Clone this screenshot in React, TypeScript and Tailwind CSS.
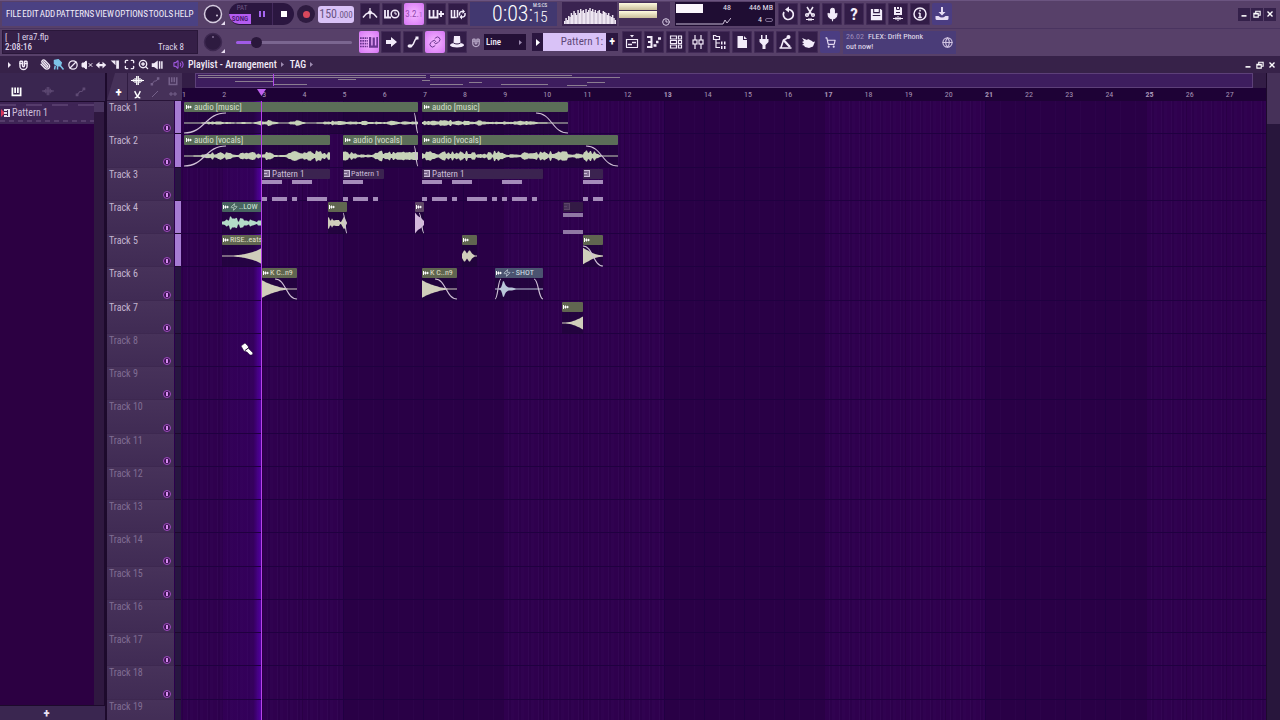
import type { ReactNode } from "react";
import { clsx } from "clsx";
import {
  Ban,
  Clock3,
  Globe,
  Link,
  Magnet,
  Maximize,
  Mic,
  Paperclip,
  ShoppingCart,
  Volume2,
  VolumeX,
  ZoomIn,
  Zap,
} from "lucide-react";

const MENUS = ["FILE", "EDIT", "ADD", "PATTERNS", "VIEW", "OPTIONS", "TOOLS", "HELP"];
const TIMELINE = 1084;
const BARS = Array.from({ length: 27 }, (_, i) => i + 1);
const TRACKS = Array.from({ length: 19 }, (_, i) => i + 1);
const COLORED = [1, 2, 4, 5];

/* ---------- icons ---------- */

function Glyph({ children, className = "size-4" }: { children: ReactNode; className?: string }) {
  return (
    <svg viewBox="0 0 16 16" fill="none" stroke="currentColor" strokeWidth="1.5" className={clsx("shrink-0", className)} aria-hidden="true">
      {children}
    </svg>
  );
}

const piano = <path d="M1.500 4v7.500h8V4M5.500 4v7" strokeWidth="1.800" />;
const wave = <path d="M0 8h16M3 6.500v3M5 5v6M7 2.500v11M9 2.500v11M11 5v6M13 6.500v3" strokeWidth="1.500" />;
const slide = (
  <>
    <path d="M3 13l4-5h3l3-4" strokeWidth="1.600" />
    <path d="M1 11h4v4H1zM11 2h4v4h-4z" fill="currentColor" stroke="none" />
  </>
);

const PianoKeys = ({ className }: { className?: string }) => (
  <Glyph className={className}>
    <path d="M2 2v11.500h12V2M6 2v8M10 2v8" strokeWidth="2.500" />
  </Glyph>
);

const transportButtons: { label: string; icon: ReactNode; lit?: boolean }[] = [
  {
    label: "Metronome",
    icon: (
      <Glyph>
        <path d="M1 11.500L4 8l3-1.500h2L12 8l3 3.500" />
        <path d="M8 2v10.500" strokeWidth="1.200" />
        <circle cx="8" cy="6.500" r="2" fill="currentColor" stroke="none" />
      </Glyph>
    ),
  },
  {
    label: "Wait for input",
    icon: (
      <Glyph>
        <path d="M1 4v7.500h6M4 4v7" strokeWidth="1.800" />
        <circle cx="11" cy="8" r="3.800" />
        <path d="M11 5.500V8h2" strokeWidth="1" />
      </Glyph>
    ),
  },
  { label: "Countdown", lit: true, icon: <span className="text-[9px] text-[#8f48ae]">3.2.<span className="text-[8px] opacity-70">1</span></span> },
  {
    label: "Blend recording",
    icon: (
      <Glyph>
        {piano}
        <path d="M13 5v6M10.500 8h5.500" strokeWidth="1.800" />
      </Glyph>
    ),
  },
  {
    label: "Loop recording",
    icon: (
      <Glyph>
        <path d="M1.500 4v7.500h5M4.500 4v7M7.500 4v7.500" strokeWidth="1.600" />
        <path d="M9.500 9.500V8a2.500 2.500 0 0 1 3-2.500h1M15 7v1.500a2.500 2.500 0 0 1-3 2.500h-1" />
        <path d="M12.500 3l2.500 2.500L12.500 8zM12 8.500v5l-2.500-2.500z" fill="currentColor" stroke="none" />
      </Glyph>
    ),
  },
];

const editButtons: { label: string; icon: ReactNode; lit?: boolean }[] = [
  {
    label: "Typing keyboard to piano",
    lit: true,
    icon: (
      <Glyph className="size-[18px]">
        <path d="M0 4.500h7M0 7h7M0 9.500h7M0 12h7" strokeWidth="1.500" strokeDasharray="1.500 .600" />
        <path d="M9 3.500V12h6.500V3.500M12.200 4v8" strokeWidth="2" />
      </Glyph>
    ),
  },
  {
    label: "Auto scroll",
    icon: (
      <Glyph>
        <path d="M3 6h5V3l6 5-6 5v-3H3z" fill="currentColor" stroke="none" />
      </Glyph>
    ),
  },
  {
    label: "Step edit",
    icon: (
      <Glyph>
        <path d="M5 12c5 0 3-6 7-8" strokeWidth="1.500" />
        <ellipse cx="5" cy="12" rx="2.500" ry="1.800" fill="currentColor" stroke="none" />
        <path d="M10.500 2.500h3v3h-3z" fill="currentColor" stroke="none" />
      </Glyph>
    ),
  },
  { label: "Link notes", lit: true, icon: <Link className="size-[12px]" strokeWidth={2} /> },
  {
    label: "Multilink",
    icon: (
      <Glyph>
        <path d="M5 2h6l.5 7c3 .5 3.500 1.500 3.500 2.500C14 14 2 14 1 11.500 1 10.500 2 9.500 4.500 9z" fill="currentColor" stroke="none" />
        <path d="M4.500 9c2 1.300 5 1.300 7 0" stroke="#2f1a45" strokeWidth="1" />
      </Glyph>
    ),
  },
];

const fileButtons: { label: string; icon: ReactNode; blue?: boolean }[] = [
  {
    label: "Undo",
    icon: (
      <Glyph>
        <path d="M8.500 3.500a5 5 0 1 1-4.500 2.500" strokeWidth="1.700" />
        <path d="M9 .5v6L5 3.500z" fill="currentColor" stroke="none" />
      </Glyph>
    ),
  },
  {
    label: "Cut",
    icon: (
      <Glyph>
        <path d="M5 1l5 8M11 1L6 9" />
        <circle cx="5" cy="9" r="1.300" />
        <circle cx="11" cy="9" r="1.300" />
        <path d="M4 13.500h8M7 12v3M9 12v3" strokeWidth="1" />
      </Glyph>
    ),
  },
  { label: "Record", icon: <Mic className="size-[15px]" fill="currentColor" strokeWidth={1.8} /> },
  { label: "Help", icon: <span className="text-[17px] leading-none font-bold">?</span> },
  {
    label: "Save",
    icon: (
      <Glyph className="size-[15px]">
        <path d="M2 2h10.500L14 3.500V14H2z" fill="currentColor" stroke="none" />
        <path d="M5 2v4h6V2M4 9h8" stroke="#2f1a45" strokeWidth="1.100" />
      </Glyph>
    ),
  },
  {
    label: "Save as audio",
    icon: (
      <Glyph>
        <path d="M4 1h7l1 1v7H4z" fill="currentColor" stroke="none" />
        <path d="M6.500 1v2.500h3V1M6 6.500h4" stroke="#2f1a45" strokeWidth="1" />
        <path d="M3 12.500h10M6 11v3M8 10v5M10 11v3" strokeWidth="1" />
      </Glyph>
    ),
  },
  {
    label: "Info",
    icon: (
      <Glyph>
        <circle cx="8" cy="8" r="6" />
        <path d="M8 7v4.500M6.500 7.300H8M6.200 11.500h3.600M8 3.800v1.600" />
      </Glyph>
    ),
  },
  {
    label: "Download",
    blue: true,
    icon: (
      <Glyph>
        <path d="M7 1h2v5h2.500L8 9.500 4.500 6H7z" fill="currentColor" stroke="none" />
        <path d="M1.500 10v2.500Q1.500 14 3 14h10q1.500 0 1.500-1.500V10h-3q-3.500 3-7 0z" fill="currentColor" stroke="none" />
      </Glyph>
    ),
  },
];

const viewButtons: { label: string; icon: ReactNode; blue?: boolean }[] = [
  {
    label: "Playlist",
    icon: (
      <Glyph>
        <path d="M2 5.500h12M2 13.500h12M2.500 5v8M13.500 5v8" strokeWidth="1.200" />
        <path d="M4 10.500h4M8 8.500h4" />
        <path d="M6 1h4L8 3.500z" fill="currentColor" stroke="none" />
      </Glyph>
    ),
  },
  {
    label: "Piano roll",
    icon: (
      <Glyph>
        <path d="M1 3h4.500v10H1M2 8h4" strokeWidth="2" />
        <path d="M7.500 11.500h3M10 8h2.500M12 4.500h3" strokeWidth="2.500" />
      </Glyph>
    ),
  },
  {
    label: "Channel rack",
    icon: (
      <Glyph>
        <path d="M2.500 2h6v3h-6zM2.500 6.500h6v3h-6zM2.500 11h6v3h-6zM10.500 2h3v3h-3zM10.500 6.500h3v3h-3zM10.500 11h3v3h-3z" strokeWidth="1.200" />
      </Glyph>
    ),
  },
  {
    label: "Mixer",
    icon: (
      <Glyph>
        <path d="M5 1v5M5 10v5M11 1v5M11 10v5" strokeWidth="1.200" />
        <rect x="3" y="6" width="4" height="4" strokeWidth="1.200" />
        <rect x="9" y="6" width="4" height="4" strokeWidth="1.200" />
      </Glyph>
    ),
  },
  {
    label: "Browser",
    icon: (
      <Glyph>
        <path d="M1.500 1.500h2l1 1h3v3h-6zM4 6v7.500h4M4 9h4" strokeWidth="1.200" />
        <path d="M9 7.500h1.500v3H9zM12 7.500h1.500v3H12zM9 12h1.500v3H9zM12 12h1.500v3H12z" fill="currentColor" stroke="none" />
      </Glyph>
    ),
  },
  {
    label: "New",
    icon: (
      <Glyph>
        <path d="M3.500 2H9v4h4v8H3.500z" fill="currentColor" stroke="none" />
        <path d="M10 2l3 3h-3z" fill="currentColor" stroke="none" />
      </Glyph>
    ),
  },
  {
    label: "Plugin picker",
    icon: (
      <Glyph>
        <path d="M5 1h1.500v4h3V1H11v4h1.500v3L9.500 11v4h-3v-4l-3-3V5H5z" fill="currentColor" stroke="none" />
      </Glyph>
    ),
  },
  {
    label: "Touch controller",
    icon: (
      <Glyph>
        <path d="M1.500 14h12M3 13.500L5.500 6l4-2" strokeWidth="1.600" />
        <path d="M5.500 6l6.500 7" strokeWidth="2.200" />
        <circle cx="10.500" cy="3" r="2" fill="currentColor" stroke="none" />
      </Glyph>
    ),
  },
  {
    label: "Touch",
    icon: (
      <Glyph>
        <path d="M2 4l5 2 1-1 4 2 1 1 2-.5-2 5-4 1.500-4-1-1-1.500-2-.5 2-1.500L2 8l2-1z" fill="currentColor" stroke="none" />
      </Glyph>
    ),
  },
  { label: "Shop", blue: true, icon: <ShoppingCart className="size-[11px]" strokeWidth={2.5} /> },
];

function ToolButton({ label, lit, blue, children }: { label: string; lit?: boolean; blue?: boolean; children: ReactNode }) {
  return (
    <button
      aria-label={label}
      className={clsx(
        "flex h-[22px] w-5 shrink-0 items-center justify-center rounded-[2px]",
        lit && "bg-radial from-[#f6b8ff] to-[#d673f5] text-[#6a3590]",
        blue && "bg-[#4b3d82] text-[#e6dcf4]",
        !lit && !blue && "bg-[#321c47] text-[#f3ecfa] shadow-[inset_0_0_0_1px_#432b58]",
      )}
    >
      {children}
    </button>
  );
}

/* ---------- toolbar ---------- */

function Knob({ label, light }: { label: string; light?: boolean }) {
  return (
    <button aria-label={label} className="flex w-[31px] shrink-0 items-center justify-center">
      <svg viewBox="0 0 22 22" className="size-[22px]" aria-hidden="true">
        <circle cx="10" cy="11" r="8.500" fill="#2e1b40" stroke={light ? "#d6cce0" : "#3d2850"} strokeWidth="1.500" />
        {light ? <circle cx="14" cy="12.500" r="1" fill="#d6cce0" /> : <path d="M10 5v2" stroke="#a995bb" />}
        <path d="M22 18v4h-4z" fill="#e6dcf0" />
      </svg>
    </button>
  );
}

const scopeBars = [3, 6, 4, 8, 7, 11, 9, 13, 11, 9, 14, 11, 15, 13, 14, 11, 15, 12, 14, 16, 13, 15, 12, 14, 11, 13, 14, 11, 10, 13, 12, 11, 9, 11, 8, 7, 9, 6, 4];

function Toolbar() {
  return (
    <header className="flex h-14 shrink-0 flex-col border-t border-[#6b5480] bg-[#574069]">
      <div className="flex h-7 items-center border-b border-[#4a3460] px-[2px]">
        <nav className="flex h-6 w-[196px] shrink-0 items-center gap-px bg-[#4b4183] pl-1 text-[9px] whitespace-nowrap text-[#f3eefa]">
          {MENUS.map((m) => (
            <button key={m}>{m}</button>
          ))}
        </nav>
        <Knob label="Master volume" light />
        <div className="flex h-[22px] w-[65px] shrink-0 overflow-hidden rounded-full bg-[#2b1640]">
          <div className="flex w-[22px] flex-col text-[7px] leading-none">
            <button className="h-[11px] pl-1 text-[#6b5580]">PAT</button>
            <button className="h-[10px] rounded-bl-full bg-[#b45cf0] font-medium text-[#3b1260]">SONG</button>
          </div>
          <button aria-label="Pause" className="flex flex-1 items-center justify-center gap-[2px] border-r border-[#43295c]">
            <span className="h-[6px] w-[2px] bg-[#a566f0]" />
            <span className="h-[6px] w-[2px] bg-[#a566f0]" />
          </button>
          <button aria-label="Stop" className="flex flex-1 items-center justify-center">
            <span className="size-[6px] bg-white" />
          </button>
        </div>
        <button aria-label="Record" className="mx-[3px] flex size-[18px] shrink-0 items-center justify-center rounded-full bg-[#2e1b40]">
          <span className="size-[7px] rounded-full bg-[#d8485c]" />
        </button>
        <button className="h-[17px] w-9 shrink-0 rounded-[3px] bg-[#d9c2f7] text-[12px] leading-[17px] text-[#6a5484]">
          150<span className="text-[9px]">.000</span>
        </button>
        <div className="ml-[6px] flex gap-[2px]">
          {transportButtons.map((b) => (
            <ToolButton key={b.label} label={b.label} lit={b.lit}>
              {b.icon}
            </ToolButton>
          ))}
        </div>
        <div className="ml-[2px] flex h-6 w-[87px] shrink-0 justify-end bg-[#423870] pr-1 text-white">
          <span className="text-[22px] leading-6 font-light">0:03:</span>
          <span className="flex w-5 flex-col">
            <span className="text-[5px] leading-[7px]">M:S:CS</span>
            <span className="text-[15px] leading-4 font-light">15</span>
          </span>
        </div>
        <svg viewBox="0 0 55 24" preserveAspectRatio="none" className="ml-[5px] h-6 w-[55px] shrink-0 bg-[#3a2350]" aria-hidden="true">
          {scopeBars.map((h, i) => (
            <rect key={i} x={2 + i * 1.33} y={22 - h} width="1.500" height={h} fill="#eee6f2" />
          ))}
        </svg>
        <div className="ml-[2px] flex h-6 w-[51px] shrink-0 items-end justify-between bg-[#452e59]">
          <div className="flex h-[22px] w-[38px] flex-col gap-px self-start pt-px">
            <span className="h-[7px] bg-linear-to-b from-[#fffbe0] to-[#c9bd9a]" />
            <span className="h-[7px] bg-linear-to-b from-[#fffbe0] to-[#c9bd9a]" />
          </div>
          <Clock3 className="size-2 text-[#d8cce4]" strokeWidth={3} />
        </div>
        <div className="ml-[5px] flex h-6 w-[100px] shrink-0 bg-[#1f0d33] text-[8px] leading-3 text-[#e8e0f0]">
          <div className="relative w-14">
            <svg viewBox="0 0 56 24" className="size-full" aria-hidden="true">
              <path d="M1 2h27v9H1z" fill="#fbf6fd" />
              <path d="M1 22h47l2-4 2 3 4-5" fill="none" stroke="#c9bcd6" />
            </svg>
            <span className="absolute top-0 right-0">48</span>
          </div>
          <div className="flex flex-1 flex-col items-end pr-[2px]">
            <span>446 MB</span>
            <span className="flex items-center gap-[3px]">
              4 <span className="h-1 w-2 rounded-full border border-[#7c6a90]" />
            </span>
          </div>
        </div>
        <div className="ml-[3px] flex gap-[2px]">
          {fileButtons.map((b) => (
            <ToolButton key={b.label} label={b.label} blue={b.blue}>
              {b.icon}
            </ToolButton>
          ))}
        </div>
        <div className="mr-[2px] ml-auto flex h-[13px] gap-px">
          <WindowButtons boxed />
        </div>
      </div>

      <div className="flex h-7 items-center px-[2px]">
        <div className="flex h-6 w-[196px] shrink-0 flex-col justify-center border border-[#2a173a] bg-[#351f47] px-[2px] text-[9px] leading-[10px] text-[#ded3e8]">
          <span className="whitespace-pre">[     ] era7.flp</span>
          <span className="flex justify-between">
            <span className="font-medium">2:08:16</span>
            <span className="mr-[11px]">Track 8</span>
          </span>
        </div>
        <Knob label="Master pitch" />
        <div className="mx-[7px] flex w-[116px] shrink-0 items-center">
          <input
            type="range"
            aria-label="Song position"
            defaultValue={14}
            className="h-[3px] w-full appearance-none rounded-full bg-linear-to-r from-[#a05be6] from-18% to-[#7b6690] to-18% [&::-webkit-slider-thumb]:size-[11px] [&::-webkit-slider-thumb]:appearance-none [&::-webkit-slider-thumb]:rounded-full [&::-webkit-slider-thumb]:bg-[#2a173b]"
          />
        </div>
        <div className="flex gap-[2px]">
          {editButtons.map((b) => (
            <ToolButton key={b.label} label={b.label} lit={b.lit}>
              {b.icon}
            </ToolButton>
          ))}
        </div>
        <Magnet className="mr-[3px] ml-1 size-[10px] shrink-0 rotate-135 text-[#b7a7c6]" strokeWidth={3} />
        <div className="flex h-4 w-[42px] shrink-0 items-center bg-[#241036] pr-1">
          <select aria-label="Snap" className="w-full appearance-none pl-[2px] text-[9px] font-medium text-[#efe8f5]">
            <option>Line</option>
          </select>
          <Caret className="h-[5px] w-[3px] text-[#9d8bb0]" />
        </div>
        <div className="ml-[6px] flex h-[18px] w-[86px] shrink-0 bg-[#2b1640]">
          <button aria-label="Previous pattern" className="flex w-[11px] items-center justify-center text-white">
            <Caret className="h-[7px] w-1" />
          </button>
          <button className="flex-1 bg-[#d9c2f7] pr-[3px] text-right text-[11px] leading-[18px] text-[#5e4878]">Pattern 1:</button>
          <button aria-label="Add pattern" className="w-[12px] text-[12px] leading-[16px] font-bold text-white">
            +
          </button>
        </div>
        <div className="ml-1 flex gap-[2px]">
          {viewButtons.map((b) => (
            <ToolButton key={b.label} label={b.label} blue={b.blue}>
              {b.icon}
            </ToolButton>
          ))}
        </div>
        <a href="#news" className="ml-[3px] flex h-[23px] w-[113px] shrink-0 items-center justify-between bg-[#4a3c78] px-[3px] text-[8px] leading-[10px] text-[#ebe3f4]">
          <span>
            <span className="mr-1 text-[#9c8bb8]">26.02</span>FLEX: Drift Phonk
            <br />
            out now!
          </span>
          <Globe className="size-[11px] shrink-0 text-[#cfc2e0]" strokeWidth={2.5} />
        </a>
      </div>
    </header>
  );
}

function Caret({ className }: { className?: string }) {
  return (
    <svg viewBox="0 0 4 8" preserveAspectRatio="none" className={clsx("shrink-0", className)} aria-hidden="true">
      <path d="M0 0l4 4-4 4z" fill="currentColor" />
    </svg>
  );
}

function WindowButtons({ boxed }: { boxed?: boolean }) {
  const shapes = [
    { label: "Minimize", path: <path d="M4 11h8" strokeWidth="2.500" /> },
    { label: "Restore", path: <path d="M3 7h7v6H3zM6 6V3.500h7V10h-2M3 8h7" strokeWidth="1.800" /> },
    { label: "Close", path: <path d="M4 4l8 8M12 4l-8 8" strokeWidth="2.200" /> },
  ];
  return (
    <>
      {shapes.map((s) => (
        <button
          key={s.label}
          aria-label={s.label}
          className={clsx("flex h-[13px] w-[12px] items-center justify-center text-white", boxed && "bg-[#34204a]")}
        >
          <Glyph className="size-[10px]">{s.path}</Glyph>
        </button>
      ))}
    </>
  );
}

/* ---------- playlist title bar ---------- */

const playlistTools: { label: string; icon: ReactNode }[] = [
  { label: "Draw", icon: <Paperclip className="size-[11px] -scale-x-100" strokeWidth={3} /> },
  {
    label: "Paint",
    icon: (
      <Glyph className="size-3 text-[#7cc4e8]">
        <path d="M2 2l5-1 4 4-1 3-4 1-4-3zM9 8l5 6M3 9l-1 5M6 10v4" fill="currentColor" strokeWidth="2" />
      </Glyph>
    ),
  },
  { label: "Delete", icon: <Ban className="size-[10px] -scale-x-100" strokeWidth={3} /> },
  { label: "Mute", icon: <VolumeX className="size-3" fill="currentColor" strokeWidth={2} /> },
  {
    label: "Slip",
    icon: (
      <Glyph className="size-3">
        <path d="M1 8l5-4.500V6.500h4V3.500L15 8l-5 4.500V9.500H6v3z" fill="currentColor" stroke="none" />
      </Glyph>
    ),
  },
  {
    label: "Slice",
    icon: (
      <Glyph className="size-[11px]">
        <path d="M1 2h7v7zM9 2h4v12H9z" fill="currentColor" stroke="none" />
      </Glyph>
    ),
  },
  { label: "Select", icon: <Maximize className="size-[11px]" strokeWidth={3} /> },
  { label: "Zoom", icon: <ZoomIn className="size-[11px]" strokeWidth={3} /> },
  {
    label: "Playback",
    icon: (
      <Glyph className="size-3">
        <path d="M1 5.500h3L9 2v12l-5-3.500H1z" fill="currentColor" stroke="none" />
        <path d="M11.500 3v10M14.500 3v10" strokeWidth="2" />
      </Glyph>
    ),
  },
];

function PlaylistTitle() {
  return (
    <div className="flex h-[17px] shrink-0 items-center bg-[#372249] pr-[2px] text-[10px] font-medium text-[#f1eaf7]">
      <button aria-label="Playlist menu" className="flex w-4 justify-center pl-[3px]">
        <Caret className="h-[6px] w-[3px]" />
      </button>
      <button aria-label="Snap to grid" className="mr-2 flex w-[14px] justify-center">
        <Magnet className="size-[11px] rotate-135" strokeWidth={3} />
      </button>
      {playlistTools.map((t) => (
        <button key={t.label} aria-label={t.label} className="flex w-[14px] justify-center">
          {t.icon}
        </button>
      ))}
      <Volume2 className="mr-1 ml-[9px] size-[11px] text-[#9a55d8]" strokeWidth={2.5} />
      <h1>Playlist - Arrangement</h1>
      <Caret className="mr-[6px] ml-1 h-[5px] w-[3px] text-[#9d8bb0]" />
      <span>TAG</span>
      <Caret className="ml-1 h-[5px] w-[3px] text-[#9d8bb0]" />
      <div className="ml-auto flex">
        <WindowButtons />
      </div>
    </div>
  );
}

/* ---------- picker panel ---------- */

function Picker() {
  return (
    <aside className="flex w-[107px] shrink-0 flex-col border-r-2 border-[#1d0a2c] bg-[#3a2650]">
      <div className="flex h-7 items-center pt-2 text-[#5f4a74]">
        <button aria-label="Patterns" className="flex w-8 justify-center text-white">
          <PianoKeys className="size-[11px]" />
        </button>
        <button aria-label="Audio" className="flex w-8 justify-center">
          <Glyph className="size-3">{wave}</Glyph>
        </button>
        <button aria-label="Automation" className="flex w-8 justify-center">
          <Glyph className="size-[11px]">{slide}</Glyph>
        </button>
      </div>
      <div className="flex flex-1 border-y border-r border-[#1d0a2c]">
        <div className="flex-1 bg-[#2c0042]">
          <button className="flex h-[22px] w-full flex-col justify-between bg-[#3e2455] py-[2px]">
            <span className="h-[2px] w-full bg-[repeating-linear-gradient(90deg,#563c6c_0_16px,transparent_16px_26px)]" />
            <span className="flex items-center gap-px text-[10px] leading-3 text-[#cdbfda]">
              <PatternIcon />
              Pattern 1
            </span>
            <span className="h-[2px] w-full bg-[repeating-linear-gradient(90deg,#563c6c_0_5px,transparent_5px_9px)]" />
          </button>
        </div>
        <div className="w-[10px] bg-[#2f1840]">
          <div className="h-[10px] bg-[#4a3460]" />
        </div>
      </div>
      <button aria-label="Add to picker" className="h-[14px] pr-3 text-[13px] leading-[13px] font-bold text-[#e9e0f2]">
        +
      </button>
    </aside>
  );
}

function PatternIcon() {
  return (
    <svg viewBox="0 0 11 8" className="h-2 w-[11px] shrink-0" aria-hidden="true">
      <path d="M1 0l4 4-4 4z" fill="#d8355c" />
      <path d="M4 0h6v8H4z" fill="#e8def0" />
      <path d="M4 2.500h3M4 5.500h3M7.500 1v6" stroke="#37204a" />
    </svg>
  );
}

/* ---------- clips ---------- */

type Clip = {
  start: number;
  width: number;
  name?: string;
  kind: "audio" | "pattern";
  tone: "green" | "teal" | "olive" | "mauve" | "slate" | "violet" | "faded";
  env?: number[];
  smooth?: boolean;
  fadeIn?: number;
  fadeOut?: number;
  zap?: boolean;
  top?: [number, number][];
  bottom?: [number, number][];
};

const MUSIC = [0, 0, 0, 0.3, 0.2, 0.1, 0, 0.1, 0, 0.6, 0.5, 0, 0, 0.7, 0, 0, 0.1, 0.5, 0.3, 0.3, 0.2, 0.4, 0.2, 0.1, 0.4, 0.2, 0.3, 0.2];
const VOCALS = [0, 0, 0.1, 0.4, 0.8, 1, 0.6, 0.2, 1, 0.9, 0.7, 0.9, 0.1, 0.1, 0.9, 1.1, 0.9, 1.1, 1, 1];
const KICK = [1.8, 1.3, 0.9, 0.6, 0.3, 0.1, 0, 0, 0];

const TOP_KEYS: [number, number][] = [[0, 20], [30, 20], [80, 20]];
const LOW_KEYS: [number, number][] = [[0, 5], [10, 15], [30, 5], [45, 20], [70, 5], [80, 5], [90, 15], [110, 5]];

const arrangement: Record<number, Clip[]> = {
  1: [
    { start: 2, width: 234, name: "audio [music]", kind: "audio", tone: "green", env: MUSIC, fadeIn: 42, fadeOut: 4 },
    { start: 240, width: 146, name: "audio [music]", kind: "audio", tone: "green", env: [0.3, 0.8, 0.5, 0.6, 0.5, 0.3, 0.5, 0.1, 0.4, 0.1, 0.5, 0.3, 0.1, 0, 0, 0], fadeOut: 32 },
  ],
  2: [
    { start: 2, width: 146, name: "audio [vocals]", kind: "audio", tone: "green", env: VOCALS, fadeIn: 42 },
    { start: 161, width: 75, name: "audio [vocals]", kind: "audio", tone: "green", env: [1, 0.9, 0.2, 0.3, 1.1, 0.9, 1, 0.8, 0.9], fadeOut: 4 },
    { start: 240, width: 196, name: "audio [vocals]", kind: "audio", tone: "green", env: [0.8, 1, 0.3, 1.3, 0.9, 1, 1.2, 0.3, 0.7, 1.1, 0.5, 0.3, 0.3, 1.1, 0.9, 1, 1.2, 1, 0.8, 0.4, 1.1, 1.1, 0, 0, 0], fadeOut: 32 },
  ],
  3: [
    { start: 80, width: 68, name: "Pattern 1", kind: "pattern", tone: "violet", top: TOP_KEYS, bottom: LOW_KEYS },
    { start: 161, width: 41, name: "Pattern 1", kind: "pattern", tone: "violet", top: [[0, 20]], bottom: [[0, 5], [10, 15], [30, 5]] },
    { start: 240, width: 121, name: "Pattern 1", kind: "pattern", tone: "violet", top: TOP_KEYS, bottom: LOW_KEYS },
    { start: 401, width: 20, kind: "pattern", tone: "violet", top: [[0, 20]], bottom: [[0, 5], [10, 10]] },
  ],
  4: [
    { start: 40, width: 40, name: "..LOW", zap: true, kind: "audio", tone: "teal", env: [0.7, 1.6, 1.5, 0.8, 1.4, 0.6, 0.5, 0.4] },
    { start: 146, width: 19, kind: "audio", tone: "olive", env: [2.2, 2, 0.5, 0.7, 0.8, 0.5, 2, 0], fadeOut: 4 },
    { start: 233, width: 9, kind: "audio", tone: "mauve", env: [2.2, 1.4, 1, 0.3], smooth: true, fadeOut: 5 },
    { start: 381, width: 20, kind: "pattern", tone: "faded", top: [[0, 20]], bottom: [[0, 20]] },
  ],
  5: [
    { start: 40, width: 40, name: "RISE..eats", kind: "audio", tone: "olive", env: [0, 0, 0, 0.1, 0.3, 0.6, 1, 1.7], smooth: true },
    { start: 280, width: 15, kind: "audio", tone: "olive", env: [0.3, 1.3, 0.4, 1.3, 0.4, 0, 0], smooth: true },
    { start: 401, width: 20, kind: "audio", tone: "olive", env: [1.7, 1.2, 0.7, 0.3, 0.1, 0], smooth: true, fadeOut: 20 },
  ],
  6: [
    { start: 80, width: 35, name: "K C..n9", kind: "audio", tone: "olive", env: KICK, smooth: true, fadeOut: 22 },
    { start: 240, width: 35, name: "K C..n9", kind: "audio", tone: "olive", env: KICK, smooth: true, fadeOut: 22 },
    {
      start: 313,
      width: 48,
      name: "- SHOT",
      zap: true,
      kind: "audio",
      tone: "slate",
      env: [0, 0, 0, 0.2, 1.9, 0.7, 0.3, 0.2, 0.2, 0.1, 0, 0, 0, 0, 0, 0, 0, 0, 0, 0, 0, 0, 0, 0],
      smooth: true,
      fadeIn: 6,
      fadeOut: 9,
    },
  ],
  7: [{ start: 380, width: 21, kind: "audio", tone: "olive", env: [0, 0, 0.1, 0.4, 0.8, 1.3], smooth: true }],
};

const toneClass: Record<Clip["tone"], string> = {
  green: "bg-[#5b6e58] text-[#d8e0cf]",
  teal: "bg-[#47645f] text-[#d8ecdf]",
  olive: "bg-[#606650] text-[#e0e0cc]",
  mauve: "bg-[#5f4866] text-[#eadff0]",
  slate: "bg-[#4b5370] text-[#d6e2ea]",
  violet: "bg-[#3b2350] text-[#cdbfda]",
  faded: "bg-[#331a45] text-[#5b4568]",
};

const waveColor: Record<Clip["tone"], string> = {
  green: "#c6d2b8",
  teal: "#b4dcc8",
  olive: "#d0cebb",
  mauve: "#d4b8dc",
  slate: "#b9c6d8",
  violet: "#a58cba",
  faded: "#9078a4",
};

// mirrored peaks around y=11, interpolated between the envelope points
function wavePath(width: number, env: number[], smooth?: boolean) {
  const upper: string[] = [];
  const lower: string[] = [];
  for (let x = 0; x <= width; x++) {
    const pos = (x / width) * (env.length - 1);
    const i = Math.min(Math.floor(pos), env.length - 2);
    const level = env[i] + (env[i + 1] - env[i]) * (pos - i);
    const hash = Math.abs(Math.sin(Math.floor(x / 2) * 12.9898 + width) * 43758.5453) % 1;
    const amp = 0.6 + level * 4.5 * (smooth ? 1 : 0.2 + 0.8 * hash);
    upper.push(`${x} ${(11 - amp).toFixed(1)}`);
    lower.unshift(`${x} ${(11 + amp).toFixed(1)}`);
  }
  return `M${upper.join("L")}L${lower.join("L")}Z`;
}

function AudioBody({ clip }: { clip: Clip }) {
  const { width: w, fadeIn, fadeOut } = clip;
  return (
    <svg viewBox={`0 0 ${w} 22`} preserveAspectRatio="none" className="h-[22px] w-full bg-[#1c0536]/60" aria-hidden="true">
      <path d={wavePath(w, clip.env ?? [0, 0], clip.smooth)} fill={waveColor[clip.tone]} />
      <g fill="none" stroke="#cfc0d6" strokeWidth="1.200">
        {fadeIn && <path d={`M0 21C${fadeIn * 0.5} 21 ${fadeIn * 0.5} 1 ${fadeIn} 1`} />}
        {fadeOut && <path d={`M${w - fadeOut} 1C${w - fadeOut * 0.5} 1 ${w - fadeOut * 0.5} 21 ${w} 21`} />}
      </g>
    </svg>
  );
}

function PatternBody({ clip }: { clip: Clip }) {
  return (
    <svg viewBox={`0 0 ${clip.width} 22`} preserveAspectRatio="none" className="h-[22px] w-full" aria-hidden="true">
      {clip.top?.map(([x, w]) => <rect key={x} x={x} y="1" width={w} height="4" fill={waveColor[clip.tone]} />)}
      {clip.bottom?.map(([x, w]) => <rect key={x} x={x} y="18" width={w} height="4" fill={waveColor[clip.tone]} />)}
    </svg>
  );
}

function ClipView({ clip }: { clip: Clip }) {
  return (
    <div
      className="absolute top-px flex flex-col"
      style={{ left: `${(clip.start / TIMELINE) * 100}%`, width: `${(clip.width / TIMELINE) * 100}%` }}
    >
      <div
        className={clsx(
          "flex h-[10px] items-center rounded-[1px] leading-[10px] whitespace-nowrap",
          clip.width < 50 ? "gap-px pl-px text-[8px]" : "gap-[2px] pl-[2px] text-[9px]",
          toneClass[clip.tone],
        )}
      >
        {clip.kind === "audio" ? (
          <svg viewBox="0 0 6 6" className="size-[6px] shrink-0" aria-hidden="true">
            <path d="M0 1h1v4H0zM1 2.500h1v1H1zM2 1l2 2-2 2zM4 1.500L6 3 4 4.500z" fill="#fff" />
          </svg>
        ) : (
          <svg viewBox="0 0 6 7" className="h-[7px] w-[6px] shrink-0" aria-hidden="true">
            <path d="M0 0h6v7H0z" fill="currentColor" />
            <path d="M0 2h3M0 5h3M4 1v5" stroke="#37204a" />
          </svg>
        )}
        {clip.zap && <Zap className="size-2 shrink-0" strokeWidth={2} />}
        {clip.name}
      </div>
      {clip.kind === "audio" ? <AudioBody clip={clip} /> : <PatternBody clip={clip} />}
    </div>
  );
}

/* ---------- playlist ---------- */

function MiniMap() {
  return (
    <div className="flex h-[15px] items-stretch">
      <div className="w-[13px] bg-[#331d46]" />
      <div className="flex-1 border border-[#5d4079] bg-[#3d1d5e]">
        <svg viewBox="0 0 1056 12" preserveAspectRatio="none" className="h-3 w-full" aria-hidden="true">
          <g stroke="#8b7d90" strokeWidth="1">
            <path d="M2 1.500h228M234 1.500h142M2 3.500h228M234 3.500h190" />
            <path d="M39 7.500h38M142 5.500h18M77 10.500h34M226 6.500h8M234 10.500h33M273 8.500h13M305 10.500h47M371 11.500h20M391 8.500h18" />
          </g>
          <path d="M77.500 0v12" stroke="#b04be8" />
        </svg>
      </div>
      <div className="w-[13px] bg-[#331d46]" />
    </div>
  );
}

function Ruler() {
  return (
    <div className="relative grid h-[13px] grid-cols-[repeat(27,minmax(0,1fr))] bg-[#1e0236] text-[8px] leading-[14px] text-[#a493b4]">
      {BARS.map((bar) => (
        <span key={bar} className={clsx(bar % 4 === 1 && bar > 12 && "font-bold")}>
          {bar}
        </span>
      ))}
      <svg viewBox="0 0 9 7" className="absolute top-px left-[75px] h-[7px] w-[9px]" aria-hidden="true">
        <path d="M0 0h9L4.500 7z" fill="#bf62ee" />
      </svg>
    </div>
  );
}

function CornerTools() {
  return (
    <div className="flex w-[75px] shrink-0 border-b border-[#281438] text-white">
      <button
        aria-label="Add track"
        className="flex w-[21px] items-end justify-center border-r border-[#2f1b41] bg-[#463159] pb-px pl-[3px] text-[13px] leading-3 font-bold [clip-path:polygon(8px_0,100%_0,100%_100%,0_100%)]"
      >
        +
      </button>
      <div className="grid flex-1 grid-cols-3 items-center bg-[#463159] text-[#75618a]">
        <button aria-label="Audio clips" className="flex justify-center text-white">
          <Glyph className="size-[13px]">{wave}</Glyph>
        </button>
        <button aria-label="Automation clips" className="flex justify-center">
          <Glyph className="size-[10px]">{slide}</Glyph>
        </button>
        <button aria-label="Pattern clips" className="flex justify-center">
          <PianoKeys className="size-[10px]" />
        </button>
        <button aria-label="Clear" className="flex justify-center text-white">
          <Glyph className="size-[9px]">
            <path d="M3 2q5 12 10 12M13 2Q8 14 3 14" strokeWidth="2.500" />
          </Glyph>
        </button>
        <button aria-label="Fade" className="flex justify-center">
          <Glyph className="size-2">
            <path d="M2 14L14 2" strokeWidth="2" />
          </Glyph>
        </button>
        <button aria-label="Stretch" className="flex justify-center">
          <Glyph className="size-2">
            <path d="M0 8h16M4 4v8M12 4v8" strokeWidth="2" />
          </Glyph>
        </button>
      </div>
    </div>
  );
}

function TrackHeaders() {
  return (
    <div className="grid h-[632px] w-[75px] shrink-0 auto-rows-fr">
      {TRACKS.map((t) => (
        <div key={t} className="flex">
          <div className="flex flex-1 flex-col justify-between border-b border-[#3d2850] bg-linear-to-b from-[#47325a] to-[#402b54] pr-[3px] pb-px pl-[2px]">
            <span className={clsx("text-[10px] leading-[13px]", t < 8 ? "text-[#c3b5d0]" : "text-[#806d93]")}>Track {t}</span>
            <button
              aria-label={`Mute track ${t}`}
              className="flex size-2 items-center justify-center self-end rounded-full border border-[#a04cc0] bg-[#3a1250]"
            >
              <span className="h-1 w-[2px] bg-[#d78cf0]" />
            </button>
          </div>
          <div className={clsx("mr-px ml-px w-[6px] border-b border-[#1d0a2c]", COLORED.includes(t) ? "bg-[#a67bd4]" : "bg-[#271640]")} />
        </div>
      ))}
    </div>
  );
}

function Lanes() {
  return (
    <div className="relative flex-1">
      <div className="absolute inset-0 grid grid-cols-[repeat(27,minmax(0,1fr))]">
        {BARS.map((bar) => (
          <div
            key={bar}
            className={clsx(
              "border-l",
              Math.floor((bar - 1) / 4) % 2 === 0
                ? "border-[#290045] bg-[repeating-linear-gradient(90deg,#2f004e_0_4px,#330653_4px_5px,#2c004b_5px_7px,#300250_7px_10px)]"
                : "border-[#200042] bg-[repeating-linear-gradient(90deg,#290046_0_14px,#2c034a_14px_15px)]",
            )}
          />
        ))}
      </div>
      <div className="absolute inset-y-0 left-[40px] w-[39px] bg-linear-to-r from-[#3c0070]/20 via-[#3c0070]/40 via-80% to-[#5200a0]" />
      <div className="relative grid h-[632px] auto-rows-fr">
        {TRACKS.map((t) => (
          <div key={t} className="relative border-b border-[#1f0040]">
            {arrangement[t]?.map((clip) => <ClipView key={clip.start} clip={clip} />)}
          </div>
        ))}
      </div>
      <div className="absolute inset-y-0 left-[79px] w-px bg-[#b545e6]" />
      <svg viewBox="0 0 14 14" className="absolute top-[241px] left-[58px] size-[14px]" aria-hidden="true">
        <path d="M1 4l4-3 3 3 1 3 4 4-1 2-2 0-3-3-3-1z" fill="#fff" stroke="#1b0630" strokeWidth=".5" />
        <path d="M5 8.500l4-3" stroke="#1b0630" />
      </svg>
    </div>
  );
}

function Playlist() {
  return (
    <main className="flex min-w-0 flex-1 flex-col overflow-hidden">
      <div className="flex h-7 shrink-0 bg-[#372249]">
        <CornerTools />
        <div className="min-w-0 flex-1">
          <MiniMap />
          <Ruler />
        </div>
        <div className="w-[14px] shrink-0 border-l border-[#1d0a2c] bg-[#463159]" />
      </div>
      <div className="flex min-h-0 flex-1 overflow-hidden">
        <TrackHeaders />
        <Lanes />
        <div className="w-[14px] shrink-0 border-l border-[#1d0a2c] bg-[#28163c]">
          <div className="h-[23px] bg-[#463159]" />
        </div>
      </div>
    </main>
  );
}

export default function App() {
  return (
    <div className="flex h-screen flex-col overflow-hidden bg-[#2c004c] font-['Roboto_Condensed','Roboto','Liberation_Sans',sans-serif]">
      <Toolbar />
      <PlaylistTitle />
      <div className="flex min-h-0 flex-1">
        <Picker />
        <Playlist />
      </div>
    </div>
  );
}
